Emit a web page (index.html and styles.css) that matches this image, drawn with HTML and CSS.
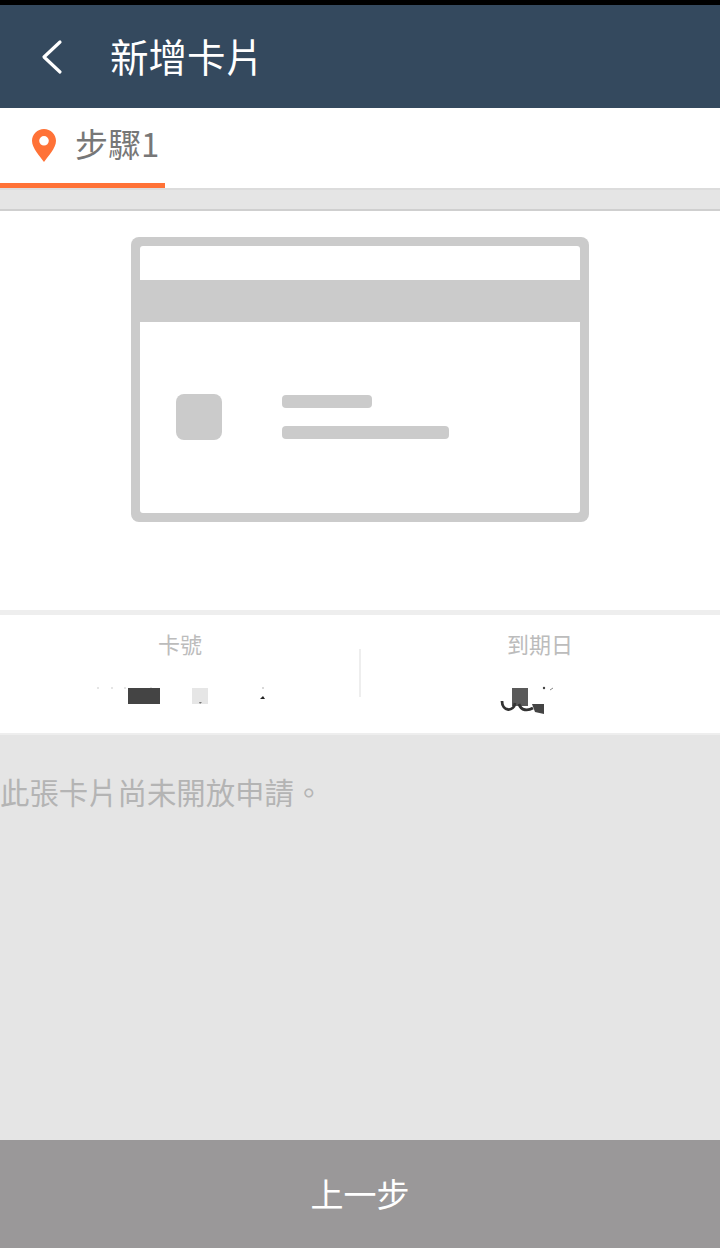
FILE: index.html
```html
<!DOCTYPE html>
<html lang="zh-Hant">

<head>
    <meta charset="UTF-8">
    <meta name="viewport" content="width=device-width, initial-scale=1.0">
    <title>新增卡片</title>
    <link rel="stylesheet" href="styles.css">
</head>

<body>
    <div class="status-bar"></div>

    <header class="app-header">
        <svg class="back-icon" viewBox="0 0 24 36" width="24" height="36">
            <path d="M20 3 L4 18 L20 33" fill="none" stroke="#fff" stroke-width="3.2" stroke-linecap="round" stroke-linejoin="round" />
        </svg>
        <h1 class="app-title">新增卡片</h1>
    </header>

    <nav class="step-tabs">
        <div class="step-tab">
            <svg class="pin-icon" viewBox="0 0 24 34" width="24" height="34">
                <path fill-rule="evenodd" fill="#ff7237" d="M12 0 C5.4 0 0 5.2 0 11.8 C0 19.5 8.4 28 12 33 C15.6 28 24 19.5 24 11.8 C24 5.2 18.6 0 12 0 Z M12 7 A4.8 4.8 0 1 1 12 16.6 A4.8 4.8 0 1 1 12 7 Z" />
            </svg>
            <span class="step-label">步驟1</span>
        </div>
    </nav>
    <div class="strip"></div>

    <section class="card-area">
        <div class="card-figure">
            <div class="card-inner">
                <div class="card-stripe"></div>
                <div class="card-body">
                    <div class="card-chip"></div>
                    <div class="card-lines">
                        <div class="card-line card-line-short"></div>
                        <div class="card-line card-line-long"></div>
                    </div>
                </div>
            </div>
        </div>
    </section>

    <section class="card-fields">
        <div class="field">
            <div class="field-label">卡號</div>
            <svg class="field-value" viewBox="0 0 360 32" width="360" height="32">
                <g fill="#ddd">
                    <circle cx="98" cy="5" r="1" />
                    <circle cx="112" cy="5" r="1" />
                    <circle cx="125" cy="5" r="1" />
                    <circle cx="151" cy="5" r="1" />
                </g>
                <rect x="128" y="5" width="32" height="16" fill="#444" />
                <rect x="192" y="5" width="16" height="16" fill="#e6e6e6" />
                <path d="M199 19 L202 19 L200 21 Z" fill="#777" />
                <path d="M260 16 L265 16 L263 13 Z" fill="#222" />
                <circle cx="263" cy="5" r="1" fill="#ccc" />
            </svg>
        </div>
        <div class="field-divider"></div>
        <div class="field">
            <div class="field-label">到期日</div>
            <svg class="field-value" viewBox="0 0 360 32" width="360" height="32">
                <rect x="152" y="5" width="16" height="18" fill="#5a5a5a" />
                <path d="M142 18 C142 29 154 29 155 20 M159 21 C161 28 168 28 173 25" fill="none" stroke="#333" stroke-width="2.8" />
                <path d="M172 21 H184 V31 L175 29 Z" fill="#444" />
                <circle cx="184" cy="5" r="1.2" fill="#444" />
                <path d="M190 7 L193 5" stroke="#888" stroke-width="1" />
            </svg>
        </div>
    </section>

    <main class="notice-area">
        <p class="notice-text">此張卡片尚未開放申請。</p>
    </main>

    <button type="button" class="prev-btn">上一步</button>
</body>

</html>
```

FILE: styles.css
```css
* {
    margin: 0;
    padding: 0;
    box-sizing: border-box;
}

body {
    font-family: "Noto Sans CJK TC", "Noto Sans", sans-serif;
    width: 720px;
    height: 1248px;
    display: flex;
    flex-direction: column;
    overflow: hidden;
    background: #e5e5e5;
}

.status-bar {
    height: 5px;
    background: #000;
}

.app-header {
    height: 103px;
    background: #34495e;
    display: flex;
    align-items: center;
    padding-left: 40px;
}

.back-icon {
    margin-right: 46px;
}

.app-title {
    font-size: 38.5px;
    font-weight: 400;
    line-height: 1;
    padding-bottom: 2px;
    color: #fff;
}

.step-tabs {
    height: 80px;
    background: #fff;
}

.step-tab {
    width: 165px;
    height: 80px;
    border-bottom: 5px solid #ff7237;
    display: flex;
    align-items: center;
    padding: 0 0 5px 32px;
}

.pin-icon {
    margin-top: 5px;
    margin-right: 19px;
}

.step-label {
    font-size: 33px;
    line-height: 1;
    color: #777;
}

.strip {
    height: 23px;
    background: #e5e5e5;
    border-top: 2px solid #dcdcdc;
    border-bottom: 2px solid #cfcfcf;
}

.card-area {
    height: 399px;
    background: #fff;
    padding: 26px 0 0 131px;
}

.card-figure {
    width: 458px;
    height: 285px;
    padding: 9px;
    border-radius: 8px;
    background: #cbcbcb;
}

.card-inner {
    height: 100%;
    padding-top: 34px;
    background: #fff;
    border-radius: 3px;
}

.card-stripe {
    height: 42px;
    background: #cbcbcb;
}

.card-body {
    display: flex;
    padding: 72px 0 0 36px;
}

.card-chip {
    width: 46px;
    height: 46px;
    background: #cbcbcb;
    border-radius: 8px;
}

.card-lines {
    margin-left: 60px;
    padding-top: 1px;
    display: flex;
    flex-direction: column;
    gap: 18px;
}

.card-line {
    height: 13px;
    background: #cbcbcb;
    border-radius: 4px;
}

.card-line-short {
    width: 90px;
}

.card-line-long {
    width: 167px;
}

.card-fields {
    height: 125px;
    background: #fff;
    border-top: 5px solid #eee;
    border-bottom: 2px solid #eee;
    display: flex;
    align-items: flex-start;
}

.field {
    width: 360px;
    flex: none;
    text-align: center;
}

.field-label {
    font-size: 22px;
    line-height: 30px;
    margin-top: 13px;
    color: #bcbcbc;
}

.field-value {
    display: block;
    margin-top: 25px;
}

.field-divider {
    width: 2px;
    height: 48px;
    margin-top: 34px;
    margin-left: -1px;
    margin-right: -1px;
    background: #eee;
}

.notice-area {
    flex: 1;
    background: #e5e5e5;
    padding-top: 36px;
}

.notice-text {
    font-size: 29.4px;
    line-height: 40px;
    color: #b4b4b4;
}

.prev-btn {
    height: 108px;
    border: none;
    padding-bottom: 2px;
    background: #9a9899;
    color: #fff;
    font-family: inherit;
    font-size: 33px;
}
```
